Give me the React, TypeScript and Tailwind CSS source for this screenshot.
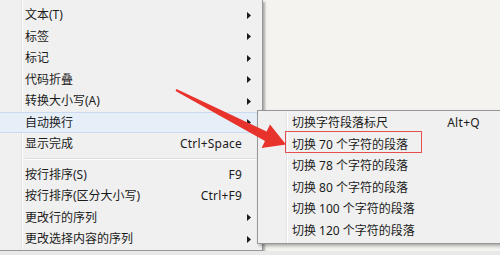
import React from "react";

type Item = { label: string; shortcut?: string; sub?: boolean; active?: boolean } | "sep";

const mainItems: Item[] = [
  { label: "文本(T)", sub: true },
  { label: "标签", sub: true },
  { label: "标记", sub: true },
  { label: "代码折叠", sub: true },
  { label: "转换大小写(A)", sub: true },
  { label: "自动换行", sub: true, active: true },
  { label: "显示完成", shortcut: "Ctrl+Space" },
  "sep",
  { label: "按行排序(S)", shortcut: "F9" },
  { label: "按行排序(区分大小写)", shortcut: "Ctrl+F9" },
  { label: "更改行的序列", sub: true },
  { label: "更改选择内容的序列", sub: true },
];

const subItems = [
  { label: "切换字符段落标尺", shortcut: "Alt+Q" },
  { label: "切换 70 个字符的段落" },
  { label: "切换 78 个字符的段落" },
  { label: "切换 80 个字符的段落" },
  { label: "切换 100 个字符的段落" },
  { label: "切换 120 个字符的段落" },
];

const font = { fontFamily: '"Noto Sans", "Noto Sans CJK SC", sans-serif' };

export default function App() {
  return (
    <div
      className="relative w-[500px] h-[255px] overflow-hidden bg-[#f5f3ef] text-[12px] text-[#1b1b1b]"
      style={font}
    >
      {/* main context menu */}
      <div className="flex flex-col w-[263px] h-[251px] pt-[4.25px] border-r border-b border-[#979797] shadow-[2px_2px_2px_rgba(0,0,0,0.3)] bg-[linear-gradient(to_right,#f0f0f0_21px,#e2e3e3_21px,#e2e3e3_22px,#ffffff_22px,#ffffff_23px,#f0f0f0_23px)]">
        {mainItems.map((it, i) =>
          it === "sep" ? (
            <div key={i} className="h-[9px] flex items-center pl-[25px] pr-[4px]">
              <div className="w-full h-[2px] border-t border-[#dcdcdc] border-b border-b-white" />
            </div>
          ) : (
            <div
              key={i}
              className={`h-[21.5px] flex items-center pl-[25px] leading-none ${
                it.active ? "bg-[#e6eef8] border-y border-[#cbdaf0]" : ""
              }`}
            >
              <span className="flex-1">{it.label}</span>
              {it.shortcut && <span className="tracking-[0.2px]">{it.shortcut}</span>}
              <div className="w-[20px] pl-[5px] flex items-center">
                {it.sub && (
                  <svg width="4" height="7" viewBox="0 0 4 7">
                    <polygon points="0,0 4,3.5 0,7" fill="#1a1a1a" />
                  </svg>
                )}
              </div>
            </div>
          )
        )}
      </div>
      <div className="h-[4px] bg-[#e9e9e9]" />

      {/* submenu */}
      <div className="absolute left-[257px] top-[110px] w-[260px] h-[134px] flex flex-col pt-[1.25px] border border-[#979797] shadow-[2px_2px_3px_rgba(0,0,0,0.3)] bg-[linear-gradient(to_right,#f0f0f0_28px,#e2e3e3_28px,#e2e3e3_29px,#ffffff_29px,#ffffff_30px,#f0f0f0_30px)]">
        {subItems.map((it, i) => (
          <div key={i} className="h-[21.5px] flex items-center pl-[34px] pr-[36px] leading-none">
            <span className="flex-1">{it.label}</span>
            {it.shortcut && <span className="tracking-[0.3px]">{it.shortcut}</span>}
          </div>
        ))}
      </div>

      {/* annotation box */}
      <div className="absolute left-[285px] top-[131px] w-[137px] h-[22px] border-[1.5px] border-[#e5504f]" />

      {/* annotation arrow */}
      <svg className="absolute inset-0" width="500" height="255" viewBox="0 0 500 255">
        <polygon
          points="175.6,90.9 176.4,89.1 266.6,131.5 270,124.6 286,144.5 261.6,148 265,141.1"
          fill="#e8332d"
        />
      </svg>
    </div>
  );
}
